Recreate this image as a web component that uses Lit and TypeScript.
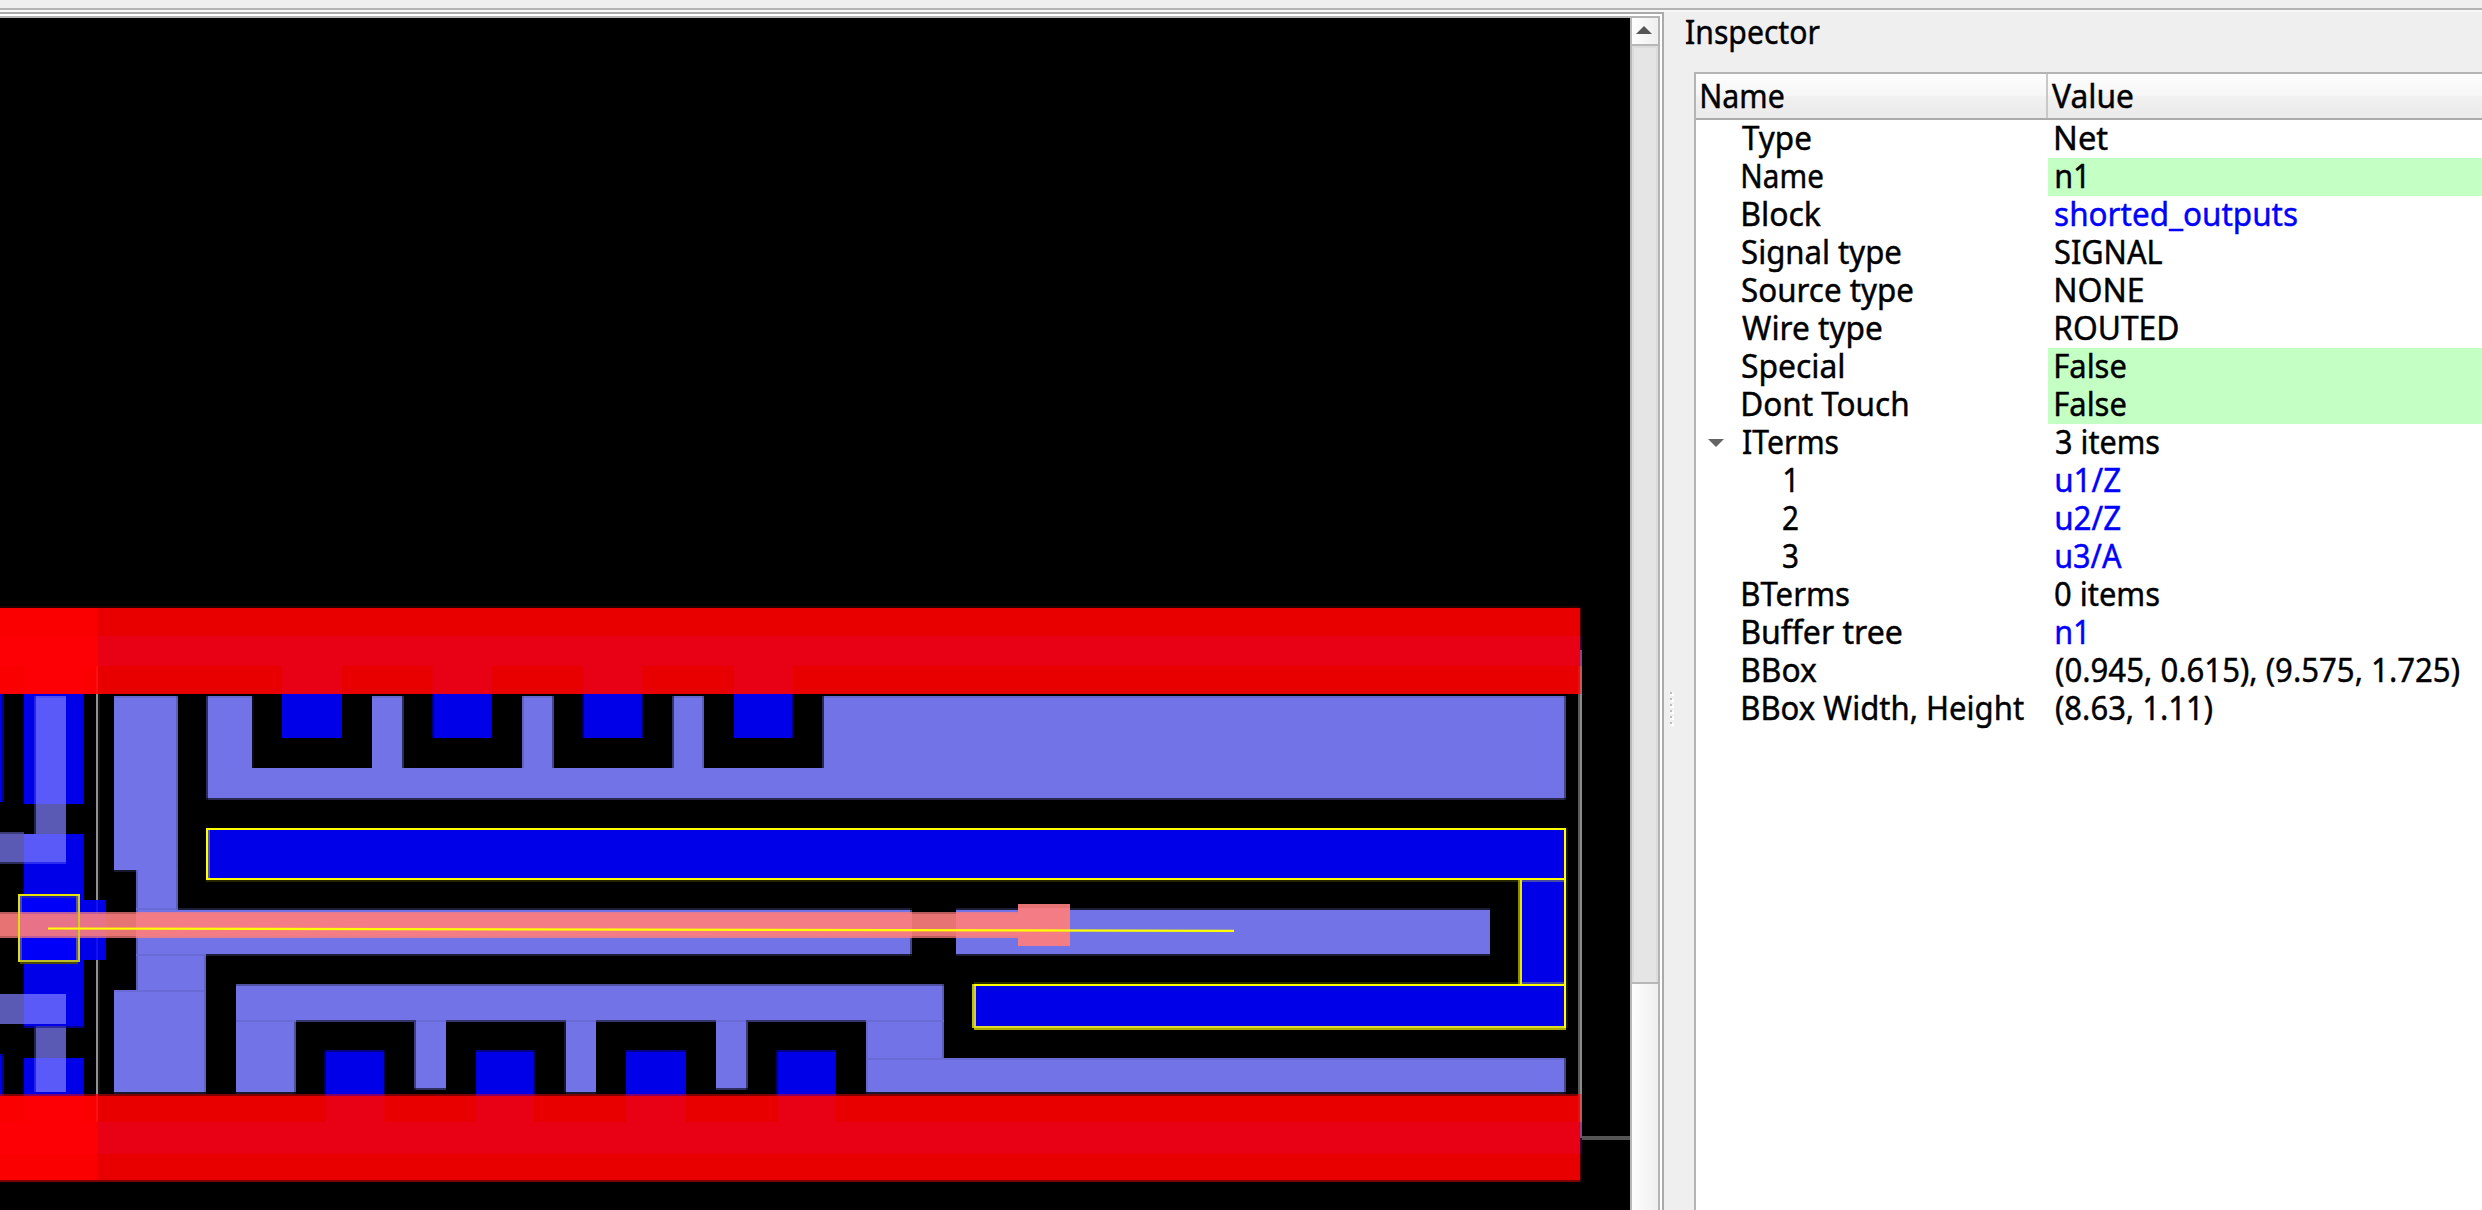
import { LitElement, html, svg, css, nothing } from "lit";
import { customElement, property } from "lit/decorators.js";

const FONT = `"Noto Sans", "Open Sans", sans-serif`;
const FONT_SIZE = 33.6;

/** A label whose visible glyphs start at `inset` and span exactly `span` pixels. */
@customElement("fitted-label")
class FittedLabel extends LitElement {
  @property() text = "";
  @property({ type: Number }) inset = 0;
  @property({ type: Number }) span = 0;

  static ctx = document.createElement("canvas").getContext("2d")!;

  static styles = css`
    :host { display: block; height: 38px; }
    .text {
      display: inline-block;
      font: 400 33.6px/34px "Noto Sans", "Open Sans", sans-serif;
      -webkit-text-stroke: 0.45px currentColor;
      white-space: pre;
      transform-origin: 0 0;
    }
  `;

  render() {
    const ctx = FittedLabel.ctx;
    ctx.font = `400 ${FONT_SIZE}px ${FONT}`;
    const m = ctx.measureText(this.text);
    const left = -m.actualBoundingBoxLeft;
    const scale = this.span / (m.actualBoundingBoxRight - left);
    const shift = this.inset - left * scale;
    return html`<span class="text" style="transform: translateX(${shift}px) scaleX(${scale})">${this.text}</span>`;
  }
}

type Rect = [number, number, number, number];

const BLUE = "#0000e8";
const LILAC = "#7373e8";
const RED = "#e80000";
const RED_MIX = "#e80014";
const SALMON = "#e87373";
const SALMON_MIX = "#f47c84";
const YELLOW = "#ffff00";
const GLASS = "#5a5ab4";
const GLASS_BLUE = "#5a5af8";

/** Splits a range on a 2px raster into [start, end, coverage] runs. */
function runs(a: number, b: number): [number, number, number][] {
  const lo = Math.ceil(a / 2) * 2;
  const hi = Math.floor(b / 2) * 2;
  const out: [number, number, number][] = [];
  if (lo > a) out.push([lo - 2, lo, (lo - a) / 2]);
  if (hi > lo) out.push([lo, hi, 1]);
  if (b > hi) out.push([hi, hi + 2, (b - hi) / 2]);
  return out;
}

/** A rectangle given by its edges, anti-aliased on the 2px raster. */
const box = (fill: string, x0: number, y0: number, x1: number, y1: number) =>
  runs(x0, x1).map(([xa, xb, cx]) =>
    runs(y0, y1).map(
      ([ya, yb, cy]) =>
        svg`<rect x=${xa} y=${ya} width=${xb - xa} height=${yb - ya} fill=${fill} fill-opacity=${cx * cy}></rect>`
    )
  );

const boxes = (fill: string, list: Rect[]) => list.map((r) => box(fill, ...r));

@customElement("layout-canvas")
class LayoutCanvas extends LitElement {
  static styles = css`
    :host { display: block; background: #000; overflow: hidden; }
    svg { display: block; }
  `;

  private cellMetal() {
    return [
      boxes(LILAC, [
        [114, 696.2, 177.6, 870.4],
        [136.4, 870, 177.6, 910],
        [136.4, 909.5, 911.2, 954.5],
        [136.4, 954, 205.7, 990],
        [114, 990, 205.7, 1092.4],
        [956, 909.5, 1490, 954.5],
        [207.2, 696.2, 252.2, 768],
        [372, 696.2, 402.8, 768],
        [522.3, 696.2, 553.2, 768],
        [673.1, 696.2, 703.6, 768],
        [823.3, 696.2, 1565.2, 768],
        [207.2, 768, 1565.2, 798.7],
        [236, 984.6, 943.6, 1020],
        [236, 1022, 295.4, 1092.4],
        [414.9, 1022, 446, 1088.8],
        [565.6, 1022, 596, 1092.4],
        [716, 1022, 747, 1088.8],
        [866.2, 1022, 943.6, 1058],
        [866.2, 1060, 1565.2, 1092.4],
      ]),
      box("#35356c", 296, 1020, 866, 1022),
      boxes("#6a6ad6", [
        [236, 1020, 296, 1022],
        [416, 1020, 446, 1022],
        [566, 1020, 596, 1022],
        [716, 1020, 746, 1022],
        [866, 1020, 944, 1022],
        [866, 1058, 1565.2, 1060],
        [136, 954, 204, 956],
        [114, 990, 204, 992],
        [136, 908, 176, 910],
      ]),
      boxes(BLUE, [
        [282, 694, 342, 738],
        [433, 694, 492, 738],
        [583.3, 694, 642.8, 738],
        [734, 694, 793.1, 738],
        [325.2, 1050.8, 384.6, 1096],
        [476, 1050.8, 534.8, 1096],
        [626, 1050.8, 686, 1096],
        [777, 1050.8, 836, 1096],
      ]),
    ];
  }

  private neighbourCell() {
    return [
      boxes(BLUE, [
        [0, 694, 3.2, 802],
        [0, 1054.4, 3.2, 1096],
        [23.8, 694, 84, 804],
        [23.8, 834, 84, 1027.2],
        [23.8, 1058, 84, 1096],
        [84, 900, 106, 960],
      ]),
      boxes(GLASS, [
        [35.2, 804, 66, 834],
        [0, 832.7, 24, 863],
        [0, 994, 24, 1024],
        [35.2, 1027, 66, 1058],
      ]),
      boxes(GLASS_BLUE, [
        [35.2, 696.3, 66, 804],
        [24, 834, 66, 863],
        [24, 994, 66, 1024],
        [35.2, 1058, 66, 1092],
      ]),
      box("#929292", 96, 694, 98, 900),
      box("#929292", 96, 960, 98, 1094),
      box("#111111", 98, 694, 100, 900),
      box("#111111", 98, 960, 100, 1094),
      box("#1212ee", 96, 900, 98, 960),
    ];
  }

  private rails() {
    return [
      boxes(RED, [
        [0, 607.7, 1580.5, 694],
        [0, 1094.9, 1580.5, 1181.1],
      ]),
      boxes(RED_MIX, [
        [98, 636, 1580, 666],
        [282, 666, 342, 694],
        [433, 666, 492, 694],
        [583.3, 666, 642.8, 694],
        [734, 666, 793, 694],
        [98, 1122, 1580, 1154],
        [326, 1096, 384.6, 1122],
        [476, 1096, 534, 1122],
        [626, 1096, 686, 1122],
        [778, 1096, 836, 1122],
      ]),
      boxes("#fa0000", [
        [0, 608, 97.6, 694],
        [0, 1096, 97.6, 1180],
      ]),
      boxes("#fd0005", [
        [0, 636, 97, 666],
        [24, 666, 84, 694],
        [0, 1122, 97, 1154],
        [24, 1096, 84, 1122],
      ]),
      boxes("#ff0c0c", [
        [96, 666, 98, 694],
        [96, 1094, 98, 1122],
      ]),
    ];
  }

  private dieOutline() {
    return [
      box("#5a5a5a", 1578, 694, 1580, 1094),
      box("#8c8c8c", 1580, 694, 1582, 1094),
      boxes("#3c0030", [
        [1580, 636, 1582, 650],
        [1580, 1138, 1582, 1154],
      ]),
      boxes("#8c4682", [
        [1580, 650, 1582, 666],
        [1580, 1122, 1582, 1138],
      ]),
      boxes("#b45f5f", [
        [1580, 666, 1582, 694],
        [1580, 1094, 1582, 1122],
      ]),
      boxes("#f40c0c", [
        [1578, 666, 1580, 694],
        [1578, 1094, 1580, 1122],
      ]),
      box("#555555", 1582, 1136, 1630, 1140),
    ];
  }

  private selectedNet() {
    return [
      box(YELLOW, 206, 828, 1566.2, 880.3),
      box(BLUE, 210, 830, 1564, 878),
      box("#5555a0", 208, 830, 210, 878),
      box("#8c8c00", 1518, 880, 1520, 984),
      box("#e8e800", 1520, 880, 1522, 984),
      box(BLUE, 1522, 880, 1564, 984),
      boxes("#4848a8", [
        [1522, 880, 1564, 882],
        [1522, 982, 1564, 984],
      ]),
      box(YELLOW, 1564, 880, 1566.2, 1028),
      box("#2a2a00", 974, 982, 1518, 984),
      box(YELLOW, 974, 984, 1566, 986),
      box("#c0c000", 972, 984, 974, 1028),
      box("#cccc55", 974, 986, 976, 1028),
      box(BLUE, 976, 986, 1564, 1026),
      box("#dcdc28", 974, 1026, 1564, 1028),
      box("#aaaa00", 974, 1028, 1566, 1030),
      // selected pin
      box("#0000fa", 20, 896, 78, 960),
      box("#4646b4", 20, 896, 22, 960),
      box("#2020b4", 22, 896, 78, 898),
      box("#5a5a96", 76, 896, 78, 960),
    ];
  }

  private wire() {
    return [
      boxes(SALMON, [
        [0, 912.4, 20, 937.6],
        [106, 912.4, 136, 937.6],
        [912, 912.4, 956, 937.6],
      ]),
      box("#e87388", 20, 912.4, 106, 937.6),
      boxes(SALMON_MIX, [
        [136, 912.2, 912, 937.8],
        [956, 912.2, 1018, 937.8],
        [1018, 904, 1070, 946],
      ]),
      box("#e67474", 1018, 904, 1070, 908),
    ];
  }

  private pinOutline() {
    return [
      box("#e6e600", 18, 894, 80, 896),
      box("#dede14", 18, 896, 20, 962),
      box("#d2c81e", 78, 896, 80, 960),
      box("#bcbc28", 20, 960, 80, 962),
      box("#4a4a00", 20, 962, 78, 964),
    ];
  }

  render() {
    return html`
      <svg width="1630" height="1192" viewBox="0 18 1630 1192">
        <g shape-rendering="crispEdges">
          ${this.cellMetal()} ${this.neighbourCell()} ${this.rails()}
          ${this.dieOutline()} ${this.selectedNet()} ${this.wire()}
          ${this.pinOutline()}
        </g>
        <line x1="48" y1="928.5" x2="1234" y2="930.9" stroke=${YELLOW} stroke-width="2.2"></line>
      </svg>
    `;
  }
}

@customElement("scroll-track")
class ScrollTrack extends LitElement {
  static styles = css`
    :host {
      display: flex;
      flex-direction: column;
      box-sizing: border-box;
      width: 30px;
      border-left: 2px solid #b8b8b8;
      border-right: 2px solid #b4b4b4;
    }
    .button {
      display: flex;
      justify-content: center;
      height: 26px;
      border-bottom: 2px solid #b8b8b8;
      background: linear-gradient(90deg, #fefefe, #efefef);
    }
    .arrow { display: block; margin: 8px 2px 0 0; }
    .groove {
      height: 936px;
      box-sizing: border-box;
      border: solid #dcdcdc;
      border-width: 2px 2px 0 2px;
      background: #e5e5e5;
    }
    .handle {
      flex: 1;
      border-top: 2px solid #b8b8b8;
      background: linear-gradient(90deg, #fefefe, #efefef);
    }
  `;

  render() {
    return html`
      <div class="button">
        <svg class="arrow" width="16" height="8" viewBox="0 0 16 8">
          <path d="M0 8 8 0l8 8z" fill="#565656"></path>
        </svg>
      </div>
      <div class="groove"></div>
      <div class="handle"></div>
    `;
  }
}

interface Row {
  name: [string, number, number];
  value: [string, number, number];
  link?: boolean;
  editable?: boolean;
  open?: boolean;
}

const ROWS: Row[] = [
  { name: ["Type", 46, 69], value: ["Net", 8, 52] },
  { name: ["Name", 47, 80], value: ["n1", 8, 28], editable: true },
  { name: ["Block", 47, 78], value: ["shorted_outputs", 7, 242], link: true },
  { name: ["Signal type", 46, 159], value: ["SIGNAL", 7, 107] },
  { name: ["Source type", 46, 171], value: ["NONE", 8, 87] },
  { name: ["Wire type", 46, 140], value: ["ROUTED", 8, 122] },
  { name: ["Special", 46, 101], value: ["False", 8, 70], editable: true },
  { name: ["Dont Touch", 47, 165], value: ["False", 8, 70], editable: true },
  { name: ["ITerms", 47, 95], value: ["3 items", 8, 103], open: true },
  { name: ["1", 88, 9], value: ["u1/Z", 8, 64], link: true },
  { name: ["2", 87, 15], value: ["u2/Z", 8, 64], link: true },
  { name: ["3", 87, 15], value: ["u3/A", 8, 66], link: true },
  { name: ["BTerms", 47, 106], value: ["0 items", 7, 104] },
  { name: ["Buffer tree", 47, 159], value: ["n1", 8, 28], link: true },
  { name: ["BBox", 47, 74], value: ["(0.945, 0.615), (9.575, 1.725)", 8, 403] },
  { name: ["BBox Width, Height", 47, 281], value: ["(8.63, 1.11)", 8, 156] },
];

const label = ([text, inset, span]: [string, number, number]) =>
  html`<fitted-label .text=${text} .inset=${inset} .span=${span}></fitted-label>`;

@customElement("inspector-panel")
class InspectorPanel extends LitElement {
  static styles = css`
    :host {
      display: flex;
      flex-direction: column;
      color: #000;
    }
    .title { height: 46px; padding: 2px 0 12px; }
    .table {
      flex: 1;
      margin-left: 30px;
      border-top: 2px solid #b4b4b4;
      border-left: 2px solid #b4b4b4;
      background: #fff;
      overflow: hidden;
    }
    .head, .row {
      display: grid;
      grid-template-columns: 352px minmax(0, 1fr);
    }
    .head {
      height: 44px;
      border-bottom: 2px solid #ababab;
      background: linear-gradient(#fdfdfd, #f6f6f6 50%, #f1f1f1 50%, #eaeaea);
    }
    .cell { padding-top: 4px; height: 40px; }
    .first { border-right: 2px solid #c8c8c8; }
    .row { height: 38px; }
    .name { position: relative; }
    .twisty { position: absolute; left: 12px; top: 15px; }
    .link { color: #0000ff; }
    .editable { background: #c4ffc4; }
  `;

  render() {
    return html`
      <div class="title">${label(["Inspector", 22, 134])}</div>
      <div class="table">
        <div class="head">
          <div class="cell first">${label(["Name", 6, 82])}</div>
          <div class="cell">${label(["Value", 4, 81])}</div>
        </div>
        ${ROWS.map(
          (r) => html`
            <div class="row">
              <div class="name">
                ${r.open
                  ? html`<svg class="twisty" width="16" height="8" viewBox="0 0 16 8">
                      <path d="M0 0h16L8 8z" fill="#646464"></path>
                    </svg>`
                  : nothing}
                ${label(r.name)}
              </div>
              <div class="value ${r.link ? "link" : ""} ${r.editable ? "editable" : ""}">
                ${label(r.value)}
              </div>
            </div>
          `
        )}
      </div>
    `;
  }
}

@customElement("app-root")
class AppRoot extends LitElement {
  static styles = css`
    :host {
      display: flex;
      flex-direction: column;
      width: 2482px;
      height: 1210px;
      overflow: hidden;
      background: #efefef;
    }
    .toolbar {
      height: 8px;
      border-bottom: 2px solid #b4b4b4;
      flex: none;
    }
    .body { display: flex; flex: 1; min-height: 0; border-top: 2px solid #f6f6f6; }
    .frame {
      flex: none;
      width: 1662px;
      display: flex;
      border-top: 2px solid #aaaaaa;
      border-right: 2px solid #aaaaaa;
    }
    .inner { display: flex; background: #fff; width: 1662px; }
    .view {
      flex: none;
      display: flex;
      width: 1660px;
      margin-top: 2px;
      border-top: 2px solid #b4b4b4;
    }
    layout-canvas { width: 1630px; }
    .splitter {
      flex: none;
      display: flex;
      flex-direction: column;
      gap: 2px;
      width: 4px;
      padding: 680px 0 0 6px;
      margin-right: -10px;
    }
    .dot {
      width: 2px;
      height: 2px;
      background: #bdbdbd;
      box-shadow: 2px 2px 0 #fff, 2px 0 0 #f8f8f8, 0 2px 0 #f8f8f8;
      margin-bottom: 2px;
      flex: none;
    }
    inspector-panel { flex: 1; min-width: 0; }
  `;

  render() {
    return html`
      <div class="toolbar"></div>
      <div class="body">
        <div class="frame">
          <div class="inner">
            <div class="view">
              <layout-canvas></layout-canvas>
              <scroll-track></scroll-track>
            </div>
          </div>
        </div>
        <div class="splitter">${[0, 1, 2, 3, 4, 5].map(() => html`<div class="dot"></div>`)}</div>
        <inspector-panel></inspector-panel>
      </div>
    `;
  }
}
